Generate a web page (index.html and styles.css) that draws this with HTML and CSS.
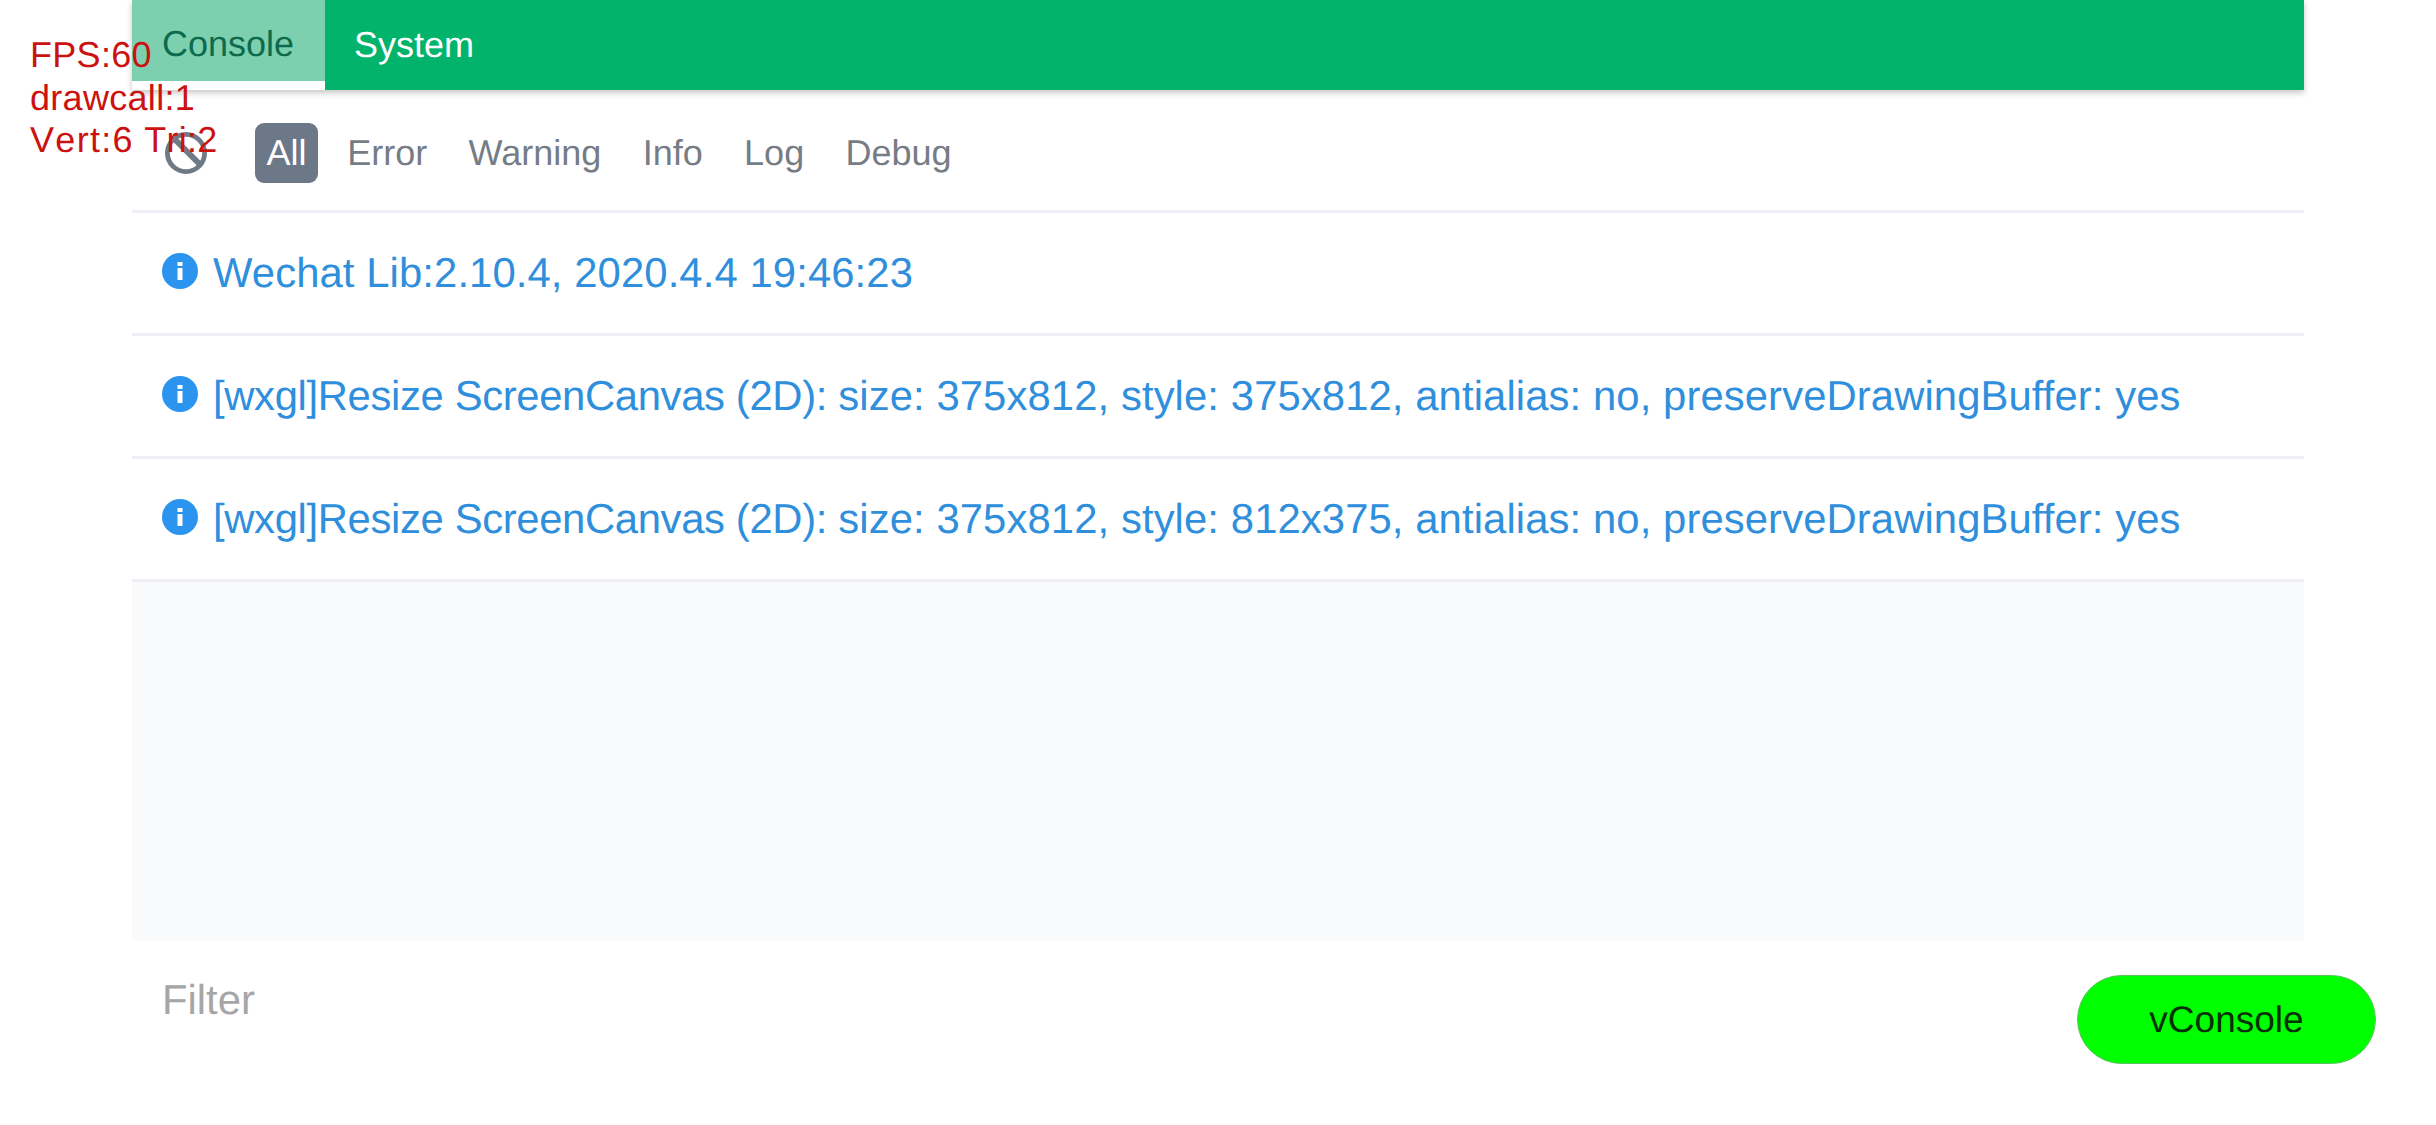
FILE: index.html
```html
<!DOCTYPE html>
<html lang="en">
<head>
<meta charset="utf-8">
<title>vConsole</title>
<link rel="stylesheet" href="styles.css">
</head>
<body>
<main class="panel">
  <nav class="tabbar">
    <div class="tab tab-active"><span class="tab-fill">Console</span></div>
    <div class="tab">System</div>
  </nav>
  <div class="toolbar">
    <svg class="clear-icon" viewBox="0 0 42 42" aria-hidden="true"><circle cx="21" cy="21" r="18.6" fill="none" stroke="#6f7a87" stroke-width="4.8"/><path d="M8 5.5 L35 32.5" stroke="#6f7a87" stroke-width="6" fill="none"/></svg>
    <div class="filters">
      <span class="filter filter-active">All</span>
      <span class="filter">Error</span>
      <span class="filter">Warning</span>
      <span class="filter">Info</span>
      <span class="filter">Log</span>
      <span class="filter">Debug</span>
    </div>
  </div>
  <section class="logs">
    <div class="log"><svg class="info-icon" viewBox="0 0 36 36" aria-hidden="true"><circle cx="18" cy="18" r="18" fill="#2a94ee"/><rect x="15.5" y="15" width="5" height="12" fill="#fff"/><rect x="15.5" y="9" width="5" height="4" fill="#fff"/></svg><span class="log-rest">Wechat Lib:2.10.4, 2020.4.4 19:46:23</span></div>
    <div class="log"><svg class="info-icon" viewBox="0 0 36 36" aria-hidden="true"><circle cx="18" cy="18" r="18" fill="#2a94ee"/><rect x="15.5" y="15" width="5" height="12" fill="#fff"/><rect x="15.5" y="9" width="5" height="4" fill="#fff"/></svg><span class="log-text"><span class="log-prefix">[wxgl]Resize ScreenCanvas (2D): </span><span class="log-rest">size: 375x812, style: 375x812, antialias: no, preserveDrawingBuffer: yes</span></span></div>
    <div class="log"><svg class="info-icon" viewBox="0 0 36 36" aria-hidden="true"><circle cx="18" cy="18" r="18" fill="#2a94ee"/><rect x="15.5" y="15" width="5" height="12" fill="#fff"/><rect x="15.5" y="9" width="5" height="4" fill="#fff"/></svg><span class="log-text"><span class="log-prefix">[wxgl]Resize ScreenCanvas (2D): </span><span class="log-rest">size: 375x812, style: 812x375, antialias: no, preserveDrawingBuffer: yes</span></span></div>
  </section>
  <div class="empty"></div>
  <div class="filter-input">Filter</div>
</main>
<div class="stats">
  <div>FPS:60</div>
  <div>drawcall:1</div>
  <div class="stat-vert"><span class="stat-wide">Vert:6</span> Tri:2</div>
</div>
<div class="vconsole-btn">vConsole</div>
</body>
</html>
```
FILE: styles.css
```css
html, body {
  margin: 0;
  height: 1125px;
  overflow: hidden;
  background: #fff;
  font-family: "Liberation Sans", Arial, sans-serif;
  text-rendering: geometricPrecision;
}
body { position: relative; }
.panel {
  margin-left: 132px;
  width: 2172px;
  height: 1125px;
  display: flex;
  flex-direction: column;
}
.tabbar {
  height: 90px;
  flex: none;
  display: flex;
  background: #02b36b;
  box-shadow: 0 3px 6px rgba(0,0,0,.22);
  position: relative;
}
.tab {
  width: 193px;
  padding-left: 29px;
  box-sizing: border-box;
  color: #fff;
  font-size: 36px;
  line-height: 90px;
}
.tab-active {
  background: #fff;
  padding-left: 0;
}
.tab-fill {
  display: block;
  height: 81px;
  line-height: 88px;
  padding-left: 30px;
  background: #7cd0b0;
  color: #0e6a4c;
}
.toolbar {
  height: 123px;
  flex: none;
  box-sizing: border-box;
  border-bottom: 3px solid #eef0f6;
  padding: 33px 0 0 33px;
  display: flex;
  align-items: flex-start;
}
.clear-icon {
  width: 42px;
  height: 42px;
  margin-top: 9px;
  flex: none;
}
.filters {
  display: flex;
  align-items: center;
  margin-left: 48px;
}
.filter {
  font-size: 36px;
  color: #767c86;
  padding: 0 20.7px;
  height: 60px;
  line-height: 60px;
  border-radius: 9px;
}
.filter-active {
  background: #6c7888;
  color: #fff;
  padding: 0 11.5px;
  margin-right: 8.5px;
}
.log {
  height: 123px;
  box-sizing: border-box;
  border-bottom: 3px solid #eef0f6;
  padding-left: 30px;
  display: flex;
  align-items: center;
  color: #2f8fdc;
  font-size: 41.8px;
}
.log-text { white-space: pre-wrap; }
.log-prefix { letter-spacing: -.35px; }
.log-rest { letter-spacing: .1px; }
.info-icon {
  width: 36px;
  height: 36px;
  margin-right: 15px;
  margin-top: -4px;
  flex: none;
}
.empty {
  flex: none;
  height: 359px;
  background: #f9fafc;
}
.filter-input {
  font-size: 41.8px;
  color: #a6a6a6;
  padding-left: 30px;
  line-height: 118px;
}
.stats {
  position: absolute;
  left: 30px;
  top: 34px;
  color: #cc1111;
  font-size: 36px;
  line-height: 42.5px;
  letter-spacing: .3px;
}
.stat-vert { font-kerning: none; }
.stat-wide { letter-spacing: 1.3px; }
.vconsole-btn {
  position: absolute;
  left: 2077px;
  top: 975px;
  width: 299px;
  height: 89px;
  border-radius: 45px;
  background: #00ff00;
  border: 1px solid #5cc45c;
  box-sizing: border-box;
  color: #063006;
  font-size: 37px;
  line-height: 87px;
  text-align: center;
}
```
